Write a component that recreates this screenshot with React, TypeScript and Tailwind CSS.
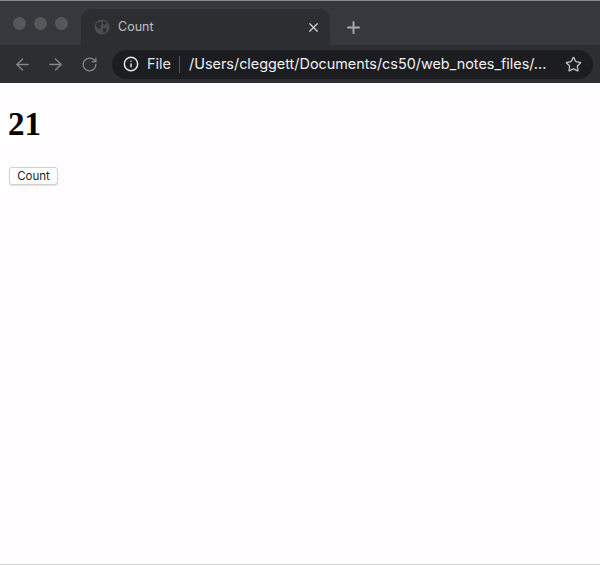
import { ArrowLeft, ArrowRight, RotateCw, Info, X, Plus, Star } from 'lucide-react';

export default function App() {
  return (
    <div className="w-[600px] h-[565px] flex flex-col bg-[#fffdff] overflow-hidden font-['Inter','Liberation_Sans',sans-serif]">
      {/* top edge */}
      <div className="h-[1px] bg-[#8a8a8c] shrink-0" />

      {/* tab strip */}
      <div className="h-[44px] shrink-0 flex bg-[#37383d]">
        <div className="w-[81px] bg-[#37383d] rounded-br-[10px] flex items-center gap-[8px] pl-[13px]">
          <div className="w-[13px] h-[13px] rounded-full bg-[#56575b]" />
          <div className="w-[13px] h-[13px] rounded-full bg-[#56575b]" />
          <div className="w-[13px] h-[13px] rounded-full bg-[#56575b]" />
        </div>
        <div className="w-[249px] bg-[#2d2e32] rounded-t-[10px] mt-[8px] flex items-center pl-[13px] pr-[9px]">
          <svg width="16" height="16" viewBox="0 0 16 16" className="shrink-0">
            <circle cx="8" cy="8" r="7.5" fill="#4b4c50" />
            <path d="M3 3.5 L7 3 L8 5 L6 7 L7 9 L5 10 L2 7 Z M9 1.5 L13 4 L11 6 L9 5 Z M9 9 L13 9.5 L11 14 L9 13 Z" fill="#2d2e32" />
          </svg>
          <span className="ml-[8px] text-[12.5px] leading-none text-[#bfc0c2]">Count</span>
          <X size={15} strokeWidth={2} className="ml-auto text-[#d0d1d3]" />
        </div>
        <div className="flex-1 bg-[#37383d] rounded-bl-[10px] flex items-center pl-[14px] pt-[9px]">
          <Plus size={19} strokeWidth={2.4} className="text-[#a9aaac]" />
        </div>
      </div>

      {/* toolbar */}
      <div className="h-[38px] shrink-0 flex items-center bg-[#2d2e32]">
        <ArrowLeft size={19} strokeWidth={1.7} className="ml-[13px] text-[#85868a]" />
        <ArrowRight size={19} strokeWidth={1.7} className="ml-[14px] text-[#85868a]" />
        <RotateCw size={17} strokeWidth={1.8} className="ml-[16px] text-[#85868a]" />
        <div className="ml-[14px] w-[481px] h-[29px] rounded-full bg-[#1c1d20] flex items-center pl-[11px]">
          <Info size={16} strokeWidth={2.2} className="text-[#e6e6e7]" />
          <span className="ml-[8px] text-[14.5px] leading-none text-[#e4e4e5]">File</span>
          <div className="ml-[8px] w-[1px] h-[17px] bg-[#55565a]" />
          <span className="ml-[9px] text-[14.4px] leading-none text-[#f0f0f1] whitespace-nowrap">/Users/cleggett/Documents/cs50/web_notes_files/...</span>
          <Star size={17} strokeWidth={1.8} className="ml-auto mr-[11px] text-[#c4c5c7]" />
        </div>
      </div>

      {/* page */}
      <div className="flex-1 flex flex-col items-start pl-[8px]">
        <h1 className="mt-[20px] text-[33px] leading-[42px] font-bold text-black font-['Liberation_Serif',serif]">21</h1>
        <button className="mt-[22px] ml-[1px] w-[49px] h-[18px] pt-[2px] rounded-[3px] bg-white border border-[#d0d0d0] shadow-[0_1px_1px_rgba(0,0,0,0.12)] text-[11.5px] leading-none text-[#222] flex items-center justify-center">
          Count
        </button>
      </div>

      {/* bottom edge */}
      <div className="h-[1px] bg-[#d3d6d3] shrink-0" />
    </div>
  );
}
